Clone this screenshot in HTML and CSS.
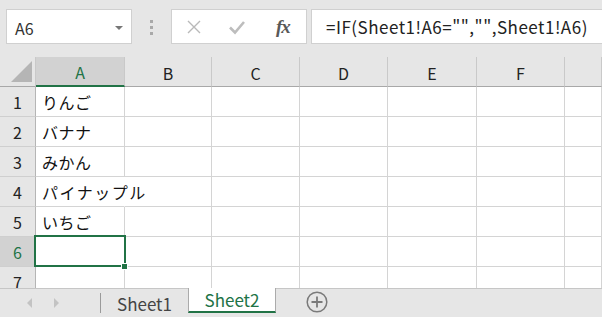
FILE: index.html
```html
<!DOCTYPE html>
<html lang="ja">
  <head>
    <meta charset="UTF-8" />
    <meta name="viewport" content="width=device-width, initial-scale=1.0" />
    <title>Sheet2</title>
    <link rel="stylesheet" href="styles.css">
  </head>
  <body>
    <!-- 数式バー -->
    <div class="toolbar">
      <div class="name-box">
        <span>A6</span>
        <span class="name-arrow"></span>
      </div>
      <div class="grip"><i></i><i></i><i></i></div>
      <div class="fx-box">
        <svg class="icon" width="16" height="16" viewBox="0 0 16 16">
          <path d="M2 2 L14 14 M14 2 L2 14" stroke="#b9b9b9" stroke-width="1.4" fill="none" />
        </svg>
        <svg class="icon" width="18" height="16" viewBox="0 0 18 16">
          <path d="M2 8.5 L7 13.5 L16 3" stroke="#bdbdbd" stroke-width="2.6" fill="none" />
        </svg>
        <span class="fx">fx</span>
      </div>
      <div class="formula">=IF(Sheet1!A6="","",Sheet1!A6)</div>
    </div>

    <!-- シート -->
    <div class="sheet">
      <div class="hd corner"><span class="tri"></span></div>
      <div class="hd col sel">A</div>
      <div class="hd col">B</div>
      <div class="hd col">C</div>
      <div class="hd col">D</div>
      <div class="hd col">E</div>
      <div class="hd col">F</div>
      <div class="hd col"></div>

      <div class="hd row">1</div>
      <div class="cell">りんご</div><div class="cell"></div><div class="cell"></div><div class="cell"></div><div class="cell"></div><div class="cell"></div><div class="cell"></div>

      <div class="hd row">2</div>
      <div class="cell">バナナ</div><div class="cell"></div><div class="cell"></div><div class="cell"></div><div class="cell"></div><div class="cell"></div><div class="cell"></div>

      <div class="hd row">3</div>
      <div class="cell">みかん</div><div class="cell"></div><div class="cell"></div><div class="cell"></div><div class="cell"></div><div class="cell"></div><div class="cell"></div>

      <div class="hd row">4</div>
      <div class="cell over">パイナップル</div><div class="cell"></div><div class="cell"></div><div class="cell"></div><div class="cell"></div><div class="cell"></div><div class="cell"></div>

      <div class="hd row">5</div>
      <div class="cell">いちご</div><div class="cell"></div><div class="cell"></div><div class="cell"></div><div class="cell"></div><div class="cell"></div><div class="cell"></div>

      <div class="hd row sel">6</div>
      <div class="cell active"></div><div class="cell"></div><div class="cell"></div><div class="cell"></div><div class="cell"></div><div class="cell"></div><div class="cell"></div>

      <div class="hd row">7</div>
      <div class="cell"></div><div class="cell"></div><div class="cell"></div><div class="cell"></div><div class="cell"></div><div class="cell"></div><div class="cell"></div>
    </div>

    <!-- シート見出し -->
    <div class="tabbar">
      <div class="nav">
        <span class="tri-left"></span>
        <span class="tri-right"></span>
      </div>
      <div class="tab">Sheet1</div>
      <div class="tab current">Sheet2</div>
      <div class="add">
        <svg width="22" height="22" viewBox="0 0 22 22">
          <circle cx="11" cy="11" r="9.8" stroke="#7a7a7a" stroke-width="1.5" fill="none" />
          <path d="M11 5.5 V16.5 M5.5 11 H16.5" stroke="#7a7a7a" stroke-width="1.8" />
        </svg>
      </div>
    </div>
  </body>
</html>
```

FILE: styles.css
```css
body {
  margin: 0;
  width: 602px;
  height: 317px;
  overflow: hidden;
  background-color: #e6e6e6;
  font-family: "Noto Sans CJK JP", "Noto Sans", sans-serif;
  color: #222;
}
.toolbar {
  display: flex;
  align-items: flex-start;
  height: 57px;
  padding-top: 9px;
  box-sizing: border-box;
}
.name-box {
  display: flex;
  align-items: center;
  justify-content: space-between;
  width: 126px;
  height: 35px;
  margin-left: 6px;
  padding: 2px 8px 0 8px;
  box-sizing: border-box;
  background-color: #fff;
  border: 1px solid #d0d0d0;
  font-size: 16px;
  color: #333;
}
.name-arrow {
  width: 0;
  height: 0;
  border-left: 4px solid transparent;
  border-right: 4px solid transparent;
  border-top: 4px solid #777;
}
.grip {
  display: flex;
  flex-direction: column;
  align-items: center;
  gap: 3px;
  width: 39px;
  padding-top: 11px;
}
.grip i {
  width: 3px;
  height: 3px;
  background-color: #a9a9a9;
}
.fx-box {
  display: flex;
  align-items: center;
  width: 136px;
  height: 35px;
  box-sizing: border-box;
  background-color: #fff;
  border: 1px solid #d0d0d0;
  padding-left: 14px;
  gap: 28px;
}
.fx-box .icon + .icon {
  margin-left: -2px;
}
.fx {
  font-family: "Liberation Serif", serif;
  font-style: italic;
  font-weight: bold;
  font-size: 19px;
  color: #595959;
  margin-left: 2px;
  letter-spacing: -1px;
}
.formula {
  flex: 1;
  height: 35px;
  margin-left: 4px;
  padding-left: 14px;
  box-sizing: border-box;
  background-color: #fff;
  border: 1px solid #d0d0d0;
  border-right: none;
  font-size: 17px;
  line-height: 33px;
  letter-spacing: 0.5px;
  color: #222;
  white-space: nowrap;
}
.sheet {
  display: grid;
  grid-template-columns: 36px 89px 87px 88px 88px 89px 88px 1fr;
  grid-auto-rows: 30px;
  height: 231px;
  overflow: hidden;
  background-color: #fff;
}
.cell {
  position: relative;
  display: flex;
  align-items: center;
  padding-left: 6px;
  box-sizing: border-box;
  border-right: 1px solid #d4d4d4;
  border-bottom: 1px solid #d4d4d4;
  font-size: 16px;
  letter-spacing: 0.5px;
  white-space: nowrap;
  color: #111;
}
.cell.over {
  overflow: visible;
  border-right-color: transparent;
  letter-spacing: 1.5px;
  z-index: 2;
}
.cell.active::after {
  content: "";
  position: absolute;
  left: -2px;
  top: -2px;
  right: -2px;
  bottom: -1px;
  border: 2px solid #217346;
  z-index: 3;
}
.cell.active::before {
  content: "";
  position: absolute;
  right: -4px;
  bottom: -4px;
  width: 5px;
  height: 5px;
  background-color: #217346;
  border: 1px solid #fff;
  z-index: 4;
}
.hd {
  display: flex;
  align-items: center;
  justify-content: center;
  box-sizing: border-box;
  background-color: #e6e6e6;
  font-size: 16px;
  color: #222;
}
.hd.col {
  border-right: 1px solid #c9c9c9;
  border-bottom: 1px solid #a8a8a8;
  padding-top: 2px;
}
.hd.row {
  border-right: 1px solid #b5b5b5;
  border-bottom: 1px solid #cfcfcf;
}
.hd.sel {
  background-color: #d2d2d2;
  color: #217346;
}
.hd.col.sel {
  border-bottom: 2px solid #217346;
}
.corner {
  align-items: flex-end;
  justify-content: flex-end;
  padding: 0 3px 4px 0;
  border-right: 1px solid #c9c9c9;
  border-bottom: 1px solid #a8a8a8;
}
.tri {
  width: 0;
  height: 0;
  border-left: 21px solid transparent;
  border-bottom: 21px solid #b5b5b5;
}
.tabbar {
  display: flex;
  align-items: stretch;
  height: 29px;
  border-top: 1px solid #c6c6c6;
  box-sizing: border-box;
  font-size: 17px;
}
.nav {
  display: flex;
  align-items: center;
  gap: 22px;
  width: 100px;
  padding-left: 27px;
  box-sizing: border-box;
}
.tri-left {
  border-top: 5px solid transparent;
  border-bottom: 5px solid transparent;
  border-right: 5px solid #c3c3c3;
}
.tri-right {
  border-top: 5px solid transparent;
  border-bottom: 5px solid transparent;
  border-left: 5px solid #c3c3c3;
}
.tab {
  display: flex;
  align-items: center;
  justify-content: center;
  width: 88px;
  box-sizing: border-box;
  border-left: 1px solid #9a9a9a;
  margin-top: 4px;
  margin-bottom: 4px;
  color: #444;
}
.tab.current {
  margin: -1px 0 0 0;
  background-color: #fff;
  border-left: 1px solid #ababab;
  border-right: 1px solid #ababab;
  border-bottom: 2px solid #217346;
  height: 25px;
  color: #217346;
  padding-bottom: 1px;
}
.add {
  display: flex;
  align-items: center;
  padding-left: 30px;
  padding-bottom: 2px;
}
```
